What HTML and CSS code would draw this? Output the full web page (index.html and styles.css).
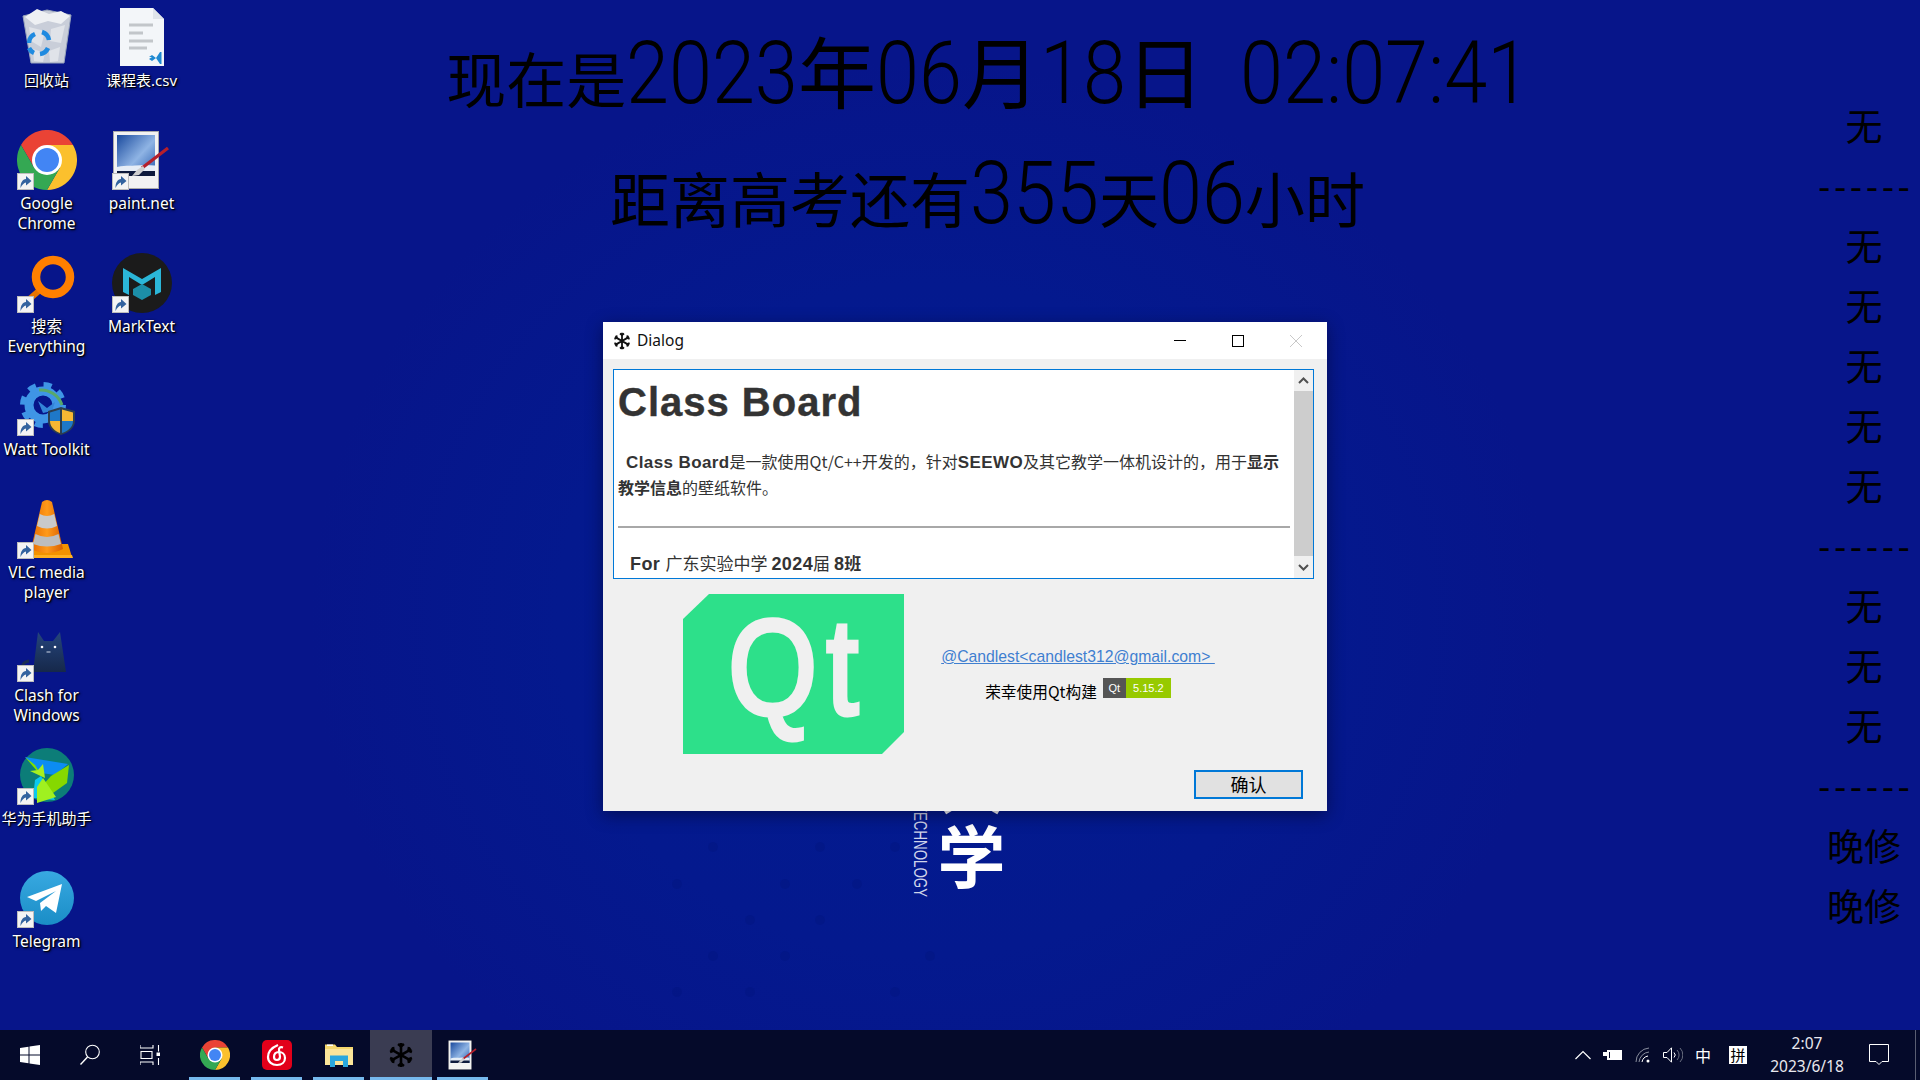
FILE: index.html
```html
<!DOCTYPE html>
<html lang="zh-CN">
<head>
<meta charset="utf-8">
<title>Desktop</title>
<link rel="stylesheet" href="styles.css">
</head>
<body>
<svg class="defs" width="0" height="0" aria-hidden="true">
  <defs>
    <linearGradient id="tg" x1="0" y1="0" x2="0" y2="1"><stop offset="0" stop-color="#38a9e1"/><stop offset="1" stop-color="#1a8dc6"/></linearGradient>
    <linearGradient id="sky" x1="0" y1="0" x2="1" y2="1"><stop offset="0" stop-color="#1a4a9e"/><stop offset=".55" stop-color="#8fb4e4"/><stop offset="1" stop-color="#2358ac"/></linearGradient>
    <linearGradient id="cat" x1="0" y1="0" x2="0" y2="1"><stop offset="0" stop-color="#25457c"/><stop offset="1" stop-color="#16284a"/></linearGradient>
    <linearGradient id="cone" x1="0" y1="0" x2="1" y2="0"><stop offset="0" stop-color="#e66a00"/><stop offset=".5" stop-color="#ff9a1a"/><stop offset="1" stop-color="#d95f00"/></linearGradient>
    <symbol id="shortcut" viewBox="0 0 17 17">
      <rect x=".5" y=".5" width="16" height="16" fill="#f4f4f4" stroke="#bdbdbd"/>
      <path d="M3.500 15C3.500 9.500 5.500 6.500 9 6V3l5.500 5L9 12.500V9.500C7 10 5 11.500 3.500 15Z" fill="#33639f"/>
    </symbol>
    <symbol id="chrome" viewBox="-30 -30 60 60">
      <path d="M-26-15A30 30 0 0 1 26-15H0L-13 7.500Z" fill="#ea4335"/>
      <path d="M26-15A30 30 0 0 1 0 30L13 7.500 0-15Z" fill="#fbc02d"/>
      <path d="M0 30A30 30 0 0 1-26-15L-13 7.500H13Z" fill="#34a853"/>
      <circle r="15" fill="#fff"/><circle r="12" fill="#4285f4"/>
    </symbol>
    <symbol id="paint" viewBox="0 0 60 60">
      <rect x="1.500" y="1.500" width="45" height="57" fill="#f2f2f2" stroke="#a9a9a9"/>
      <rect x="5" y="5" width="38" height="41" fill="url(#sky)"/>
      <path d="M5 37c8-2 12-1 18-1.500s12-1 20 0V42H5Z" fill="#e6edf6"/>
      <rect x="5" y="41" width="38" height="5" fill="#0e1a3c"/>
      <path d="M56 18 30 38" stroke="#b51f2b" stroke-width="3.200" fill="none"/>
      <path d="M31 36 25 40l-5 6 7-1 6-6Z" fill="#cfcfcf"/>
    </symbol>
    <symbol id="snow" viewBox="0 0 24 24">
      <g stroke="currentColor" stroke-width="2.400" fill="none">
        <path d="M12 1V23M2.500 6.500 21.500 17.500M21.500 6.500 2.500 17.500"/>
        <path d="M9.300 1.900 12 4 14.700 1.900M9.300 22.100 12 20 14.700 22.100M19.400 4.600 18.900 8 22.100 9.300M19.400 19.400 18.900 16 22.100 14.700M4.600 4.600 5.100 8 1.900 9.300M4.600 19.400 5.100 16 1.900 14.700"/>
      </g>
    </symbol>
  </defs>
</svg>

<main class="desktop">
  <div class="wall-art" aria-hidden="true">
    <svg class="wall-dots" viewBox="0 0 360 220" width="360" height="220">
      <g fill="#01137a" opacity=".3">
        <circle cx="53" cy="47" r="5"/><circle cx="160" cy="47" r="5"/><circle cx="235" cy="47" r="5"/>
        <circle cx="17" cy="84" r="5"/><circle cx="125" cy="84" r="5"/><circle cx="197" cy="84" r="5"/>
        <circle cx="90" cy="120" r="5"/><circle cx="160" cy="120" r="5"/>
        <circle cx="53" cy="156" r="5"/><circle cx="125" cy="156" r="5"/><circle cx="270" cy="156" r="5"/>
        <circle cx="17" cy="192" r="5"/><circle cx="90" cy="192" r="5"/><circle cx="235" cy="192" r="5"/>
      </g>
    </svg>
    <span class="wall-en">TECHNOLOGY</span>
    <span class="wall-cn">大学</span>
  </div>

  <section class="icons">
    <div class="icon-col">
      <div class="icon">
        <div class="glyph">
          <svg viewBox="0 0 60 60" width="60" height="60">
            <path d="M6 9 30 3l24 5-7 48H14Z" fill="#c9ced9" stroke="#9aa6bc"/>
            <path d="M8 10 20 2l12 5 12-3 9 5-9 8-13-3-13 4Z" fill="#eef0f3"/>
            <path d="M12 20 28 24 24 40 14 34ZM34 22 48 18 44 36 33 34ZM16 42 28 46 26 55 17 54ZM32 44 43 40 41 54 33 55Z" fill="#e0e3e9"/>
            <g fill="none" stroke="#1f8ae0" stroke-width="4.500"><path d="M12 36a10 10 0 0 1 6-9"/><path d="M25 25a10 10 0 0 1 7 8"/><path d="M31 41a10 10 0 0 1-8 6"/><path d="M17 46a10 10 0 0 1-5-5"/></g>
          </svg>
        </div>
        <span class="label label-cjk">回收站</span>
      </div>
      <div class="icon">
        <div class="glyph"><svg viewBox="0 0 60 60" width="60" height="60"><use href="#chrome"/></svg><svg class="sc"><use href="#shortcut"/></svg></div>
        <span class="label">Google Chrome</span>
      </div>
      <div class="icon">
        <div class="glyph">
          <svg viewBox="0 0 60 60" width="60" height="60">
            <path d="M24 36 8 50" stroke="#e87400" stroke-width="6" fill="none"/>
            <circle cx="36" cy="24" r="17" fill="none" stroke="#ff7f00" stroke-width="8.500"/>
          </svg>
          <svg class="sc"><use href="#shortcut"/></svg>
        </div>
        <span class="label">搜索 Everything</span>
      </div>
      <div class="icon">
        <div class="glyph">
          <svg viewBox="0 0 60 60" width="60" height="60">
            <circle cx="26" cy="29" r="14" fill="none" stroke="#3f95e6" stroke-width="9"/>
            <circle cx="26" cy="29" r="20" fill="none" stroke="#3f95e6" stroke-width="6" stroke-dasharray="8 7.700"/>
            <path d="M22 14a22 22 0 0 1 23 15" fill="none" stroke="#58a86a" stroke-width="3"/>
            <path d="M21 25l9 7 8-6-3 9-9 2Z" fill="#3384d8"/>
            <path d="M31 35l13-4 14 4v10c0 7-7 12-14 14-7-2-13-7-13-14Z" fill="#2c3e50"/>
            <path d="M33 36.500l10-3V45H33ZM45 45h11c0 6-5 10-11 12Z" fill="#1e78c8"/>
            <path d="M45 33.500l11 3V45H45ZM33 45h10v12c-5-2-10-6-10-12Z" fill="#f7b733"/>
          </svg>
          <svg class="sc"><use href="#shortcut"/></svg>
        </div>
        <span class="label">Watt Toolkit</span>
      </div>
      <div class="icon">
        <div class="glyph">
          <svg viewBox="0 0 60 60" width="60" height="60">
            <path d="M13 45 9 58H55L51 45Z" fill="#f39200"/>
            <path d="M9 56H55L56 59H8Z" fill="#ffb020"/>
            <path d="M25 3Q30-1 35 3L46 50Q30 58 14 50Z" fill="url(#cone)"/>
            <path d="M22.800 15Q30 19 37.200 15L40 27Q30 32 20 27Z" fill="#c9c9c9"/>
            <path d="M18.500 35Q30 41 41.500 35L44 45Q30 50 16 45Z" fill="#bdbdbd"/>
          </svg>
          <svg class="sc"><use href="#shortcut"/></svg>
        </div>
        <span class="label">VLC media player</span>
      </div>
      <div class="icon">
        <div class="glyph">
          <svg viewBox="0 0 60 60" width="60" height="60">
            <path d="M6 48Q4 40 12 39" fill="none" stroke="#1b2e52" stroke-width="3"/>
            <path d="M21 10l6 9h9l7-9 6 40H16Z" fill="url(#cat)"/>
            <circle cx="25" cy="25" r="1.300" fill="#fff"/><circle cx="38" cy="25" r="1.300" fill="#fff"/>
            <path d="M29.500 30h4" stroke="#cfd8e8" stroke-width="1"/>
          </svg>
          <svg class="sc"><use href="#shortcut"/></svg>
        </div>
        <span class="label">Clash for Windows</span>
      </div>
      <div class="icon">
        <div class="glyph">
          <svg viewBox="0 0 60 60" width="60" height="60">
            <circle cx="30" cy="30" r="27" fill="#0c7d78"/>
            <path d="M8 12 51 19 38 30 24 28Z" fill="#0c8cf2"/>
            <path d="M8 12 26 33 18 20Z" fill="#7fe000"/>
            <path d="M34 31 52 20 50 38 36 48 24 42Z" fill="#86d800"/>
            <path d="M21 25 26 19 28 33 13 26Z" fill="#a6f020"/>
            <path d="M18 35 24 31 38 55 16 53Z" fill="#0ac8f0"/>
            <path d="M20 42 26 33 39 52 20 58Z" fill="#a0f020"/>
          </svg>
          <svg class="sc"><use href="#shortcut"/></svg>
        </div>
        <span class="label label-cjk">华为手机助手</span>
      </div>
      <div class="icon">
        <div class="glyph">
          <svg viewBox="0 0 60 60" width="60" height="60">
            <circle cx="30" cy="30" r="27" fill="url(#tg)"/>
            <path d="M10 29 45 16 39 45 29 38 24 43 23 35 39 23 19 33Z" fill="#fff"/>
          </svg>
          <svg class="sc"><use href="#shortcut"/></svg>
        </div>
        <span class="label">Telegram</span>
      </div>
    </div>
    <div class="icon-col">
      <div class="icon">
        <div class="glyph">
          <svg viewBox="0 0 60 60" width="60" height="60">
            <path d="M8 1H41L52 12V59H8Z" fill="#f3f6f9"/>
            <path d="M41 1 52 12H41Z" fill="#dfe4ea"/>
            <path d="M17 18H41M17 26H31M17 34H41M17 41H35" stroke="#c2c6ca" stroke-width="3"/>
            <path d="M37 50l3-2 4 3 4-6h1.500v12H48l-4-6-4 3-3-2 3-2Z" fill="#1f8ad2"/>
          </svg>
        </div>
        <span class="label label-cjk">课程表.csv</span>
      </div>
      <div class="icon">
        <div class="glyph"><svg viewBox="0 0 60 60" width="60" height="60"><use href="#paint"/></svg><svg class="sc"><use href="#shortcut"/></svg></div>
        <span class="label">paint.net</span>
      </div>
      <div class="icon">
        <div class="glyph">
          <svg viewBox="0 0 60 60" width="60" height="60">
            <circle cx="30" cy="30" r="30" fill="#1b1b1b"/>
            <path d="M11 15 30 26 49 15V39L43 42V24L30 32 17 24V42L11 39Z" fill="#2bb6d8"/>
            <path d="M21 36 30 31 39 36V42L30 47 21 42Z" fill="#1c8ea8"/>
          </svg>
          <svg class="sc"><use href="#shortcut"/></svg>
        </div>
        <span class="label">MarkText</span>
      </div>
    </div>
  </section>

  <section class="clock">
    <p class="clock-line">现在是<span class="num n4">2023</span><span class="unit">年</span><span class="num n2">06</span><span class="unit">月</span><span class="num n2">18</span><span class="unit">日</span><span class="num time">02:07:41</span></p>
    <p class="clock-line">距离高考还有<span class="num n3">355</span>天<span class="num n2">06</span>小时</p>
  </section>

  <aside class="schedule">
    <span>无</span><span class="dash">------</span><span>无</span><span>无</span><span>无</span><span>无</span><span>无</span><span class="dash">------</span><span>无</span><span>无</span><span>无</span><span class="dash">------</span><span>晚修</span><span>晚修</span>
  </aside>

  <div class="dialog">
    <header class="titlebar">
      <svg class="title-icon"><use href="#snow"/></svg>
      <span class="title-text">Dialog</span>
      <div class="win-btns">
        <span class="win-btn"><svg width="12" height="12" viewBox="0 0 12 12"><path d="M0 5.500H12" stroke="#000"/></svg></span>
        <span class="win-btn"><svg width="12" height="12" viewBox="0 0 12 12"><rect x=".5" y=".5" width="11" height="11" fill="none" stroke="#000"/></svg></span>
        <span class="win-btn"><svg width="12" height="12" viewBox="0 0 12 12"><path d="M0 0 12 12M12 0 0 12" stroke="#c8c8c8"/></svg></span>
      </div>
    </header>
    <div class="dialog-body">
      <div class="doc">
        <div class="doc-text">
          <h1>Class Board</h1>
          <p class="intro"><b class="lat">Class Board</b>是一款使用Qt/C++开发的，针对<b class="lat">SEEWO</b>及其它教学一体机设计的，用于<b>显示教学信息</b>的壁纸软件。</p>
          <hr>
          <p class="for"><b class="lat">For </b>广东实验中学 <b class="lat">2024</b>届 <b class="lat">8</b><b>班</b></p>
        </div>
        <div class="scrollbar">
          <svg class="arrow" width="19" height="21" viewBox="0 0 19 21"><path d="M5 13 9.500 8.500 14 13" fill="none" stroke="#505050" stroke-width="2"/></svg>
          <div class="thumb"></div>
          <svg class="arrow" width="19" height="22" viewBox="0 0 19 22"><path d="M5 9 9.500 13.500 14 9" fill="none" stroke="#505050" stroke-width="2"/></svg>
        </div>
      </div>
      <div class="about">
        <div class="qt-logo"><span>Qt</span></div>
        <div class="about-info">
          <a class="mail">@Candlest&lt;candlest312@gmail.com&gt; </a>
          <div class="built"><span>荣幸使用Qt构建</span><span class="badge"><i class="b-l">Qt</i><i class="b-r">5.15.2</i></span></div>
        </div>
      </div>
      <div class="actions"><button class="ok">确认</button></div>
    </div>
  </div>
</main>

<footer class="taskbar">
  <div class="tb-sys">
    <span class="tb-slot"><svg width="20" height="20" viewBox="0 0 20 20"><path d="M0 3 8.500 1.800V9.500H0ZM9.500 1.600 20 0V9.500H9.500ZM0 10.500H8.500V18.200L0 17ZM9.500 10.500H20V20L9.500 18.400Z" fill="#fff"/></svg></span>
    <span class="tb-slot"><svg width="22" height="22" viewBox="0 0 22 22"><circle cx="13.500" cy="8" r="6.800" fill="none" stroke="#fff" stroke-width="1.100"/><path d="M8.500 13 1.500 20.500" stroke="#fff" stroke-width="1.400"/></svg></span>
    <span class="tb-slot"><svg width="20" height="20" viewBox="0 0 20 20"><path d="M0 0V3H13V0M1 6.500H12V13.500H1ZM0 20V17H13V20M18.500 0V6.500M18.500 13V20" fill="none" stroke="#fff" stroke-width="1.100"/><rect x="16.500" y="7.500" width="3.500" height="3.500" fill="#fff"/></svg></span>
  </div>
  <div class="tb-apps">
    <span class="tb-app"><svg width="30" height="30" viewBox="0 0 60 60"><use href="#chrome"/></svg></span>
    <span class="tb-app">
      <svg width="30" height="30" viewBox="0 0 30 30"><rect width="30" height="30" rx="5" fill="#e2001a"/><path d="M16 5C9 8 6 12 6 17c0 5 4 8 9 8 5 0 8-3 8-7 0-4-3-6-6-6-3 0-5 2-5 5 0 2 1.500 3 3 3 2 0 3-1.500 3-3.500L17 10c-.3-2 1-3.500 4-2.500" fill="none" stroke="#fff" stroke-width="2.200"/></svg>
    </span>
    <span class="tb-app">
      <svg width="28" height="24" viewBox="0 0 28 24"><path d="M0 1.500H10L12 4H28V22H0Z" fill="#f5d76e"/><path d="M0 6H28V22H0Z" fill="#fbe59a"/><rect x="2" y="1.500" width="6" height="1.500" fill="#fff"/><path d="M5 12.500H23V24H18V18H10V24H5Z" fill="#2aa7de"/></svg>
    </span>
    <span class="tb-app tb-active"><svg class="tb-snow"><use href="#snow"/></svg></span>
    <span class="tb-app"><svg width="30" height="30" viewBox="0 0 60 60"><use href="#paint"/></svg></span>
  </div>
  <div class="tray">
    <span class="tray-item"><svg width="16" height="10" viewBox="0 0 16 10"><path d="M.5 9 8 1.500 15.500 9" fill="none" stroke="#fff" stroke-width="1.200"/></svg></span>
    <span class="tray-item"><svg width="20" height="12" viewBox="0 0 20 12"><rect x="4.500" y="1.500" width="14" height="9" fill="#fff" stroke="#fff"/><rect x="6" y="3" width="1" height="6" fill="#050a2a"/><path d="M0 3H4V7H0Z" fill="#fff"/></svg></span>
    <span class="tray-item"><svg width="16" height="16" viewBox="0 0 16 16"><g fill="none" stroke="#8a8f9e"><path d="M1 15A14 14 0 0 1 14 1"/><path d="M4 15A11 11 0 0 1 14 5"/></g><path d="M7 15A7.500 7.500 0 0 1 13 9" fill="none" stroke="#fff"/><circle cx="13" cy="14" r="1.500" fill="#fff"/></svg></span>
    <span class="tray-item"><svg width="20" height="16" viewBox="0 0 20 16"><path d="M.5 5.500H4L8.500.8V15.200L4 10.500H.5Z" fill="none" stroke="#fff"/><path d="M11 5.500a3.500 3.500 0 0 1 0 5" fill="none" stroke="#fff"/><path d="M14 3a7 7 0 0 1 0 10M17 1a10 10 0 0 1 0 14" fill="none" stroke="#6a6f80"/></svg></span>
    <span class="tray-item tray-text">中</span>
    <span class="tray-ime"><b>拼</b></span>
    <div class="tray-clock"><span>2:07</span><span>2023/6/18</span></div>
    <span class="tray-note"><svg width="20" height="22" viewBox="0 0 20 22"><path d="M.5 .5H19.500V17.500H13L10 20.500 7 17.500H.5Z" fill="none" stroke="#fff"/></svg></span>
    <span class="show-desktop"></span>
  </div>
</footer>
</body>
</html>
```
FILE: styles.css
```css
* { box-sizing: border-box; }
html, body { margin: 0; padding: 0; width: 1920px; height: 1080px; overflow: hidden; }
body {
  font-family: "Noto Sans", "Noto Sans CJK SC", sans-serif;
  background: #07158a;
  display: flex;
  flex-direction: column;
}
.defs { position: absolute; }

.desktop {
  position: relative;
  height: 1030px;
  display: flex;
  background: radial-gradient(ellipse 620px 560px at 930px 620px, #021b8f 0%, #04198e 60%, #07158a 100%);
  overflow: hidden;
}

/* wallpaper */
.wall-art { position: absolute; left: 660px; top: 800px; width: 360px; height: 220px; }
.wall-dots { position: absolute; left: 0; top: 0; }
.wall-en {
  position: absolute;
  left: 252px;
  bottom: 123px;
  writing-mode: vertical-rl;
  white-space: nowrap;
  font: 18px/15px "Liberation Sans", sans-serif;
  color: #cfd4ea;
  transform: scaleY(.74);
  transform-origin: bottom;
}
.wall-cn {
  position: absolute;
  left: 274px;
  bottom: 122px;
  writing-mode: vertical-rl;
  white-space: nowrap;
  font: 700 68px/74px "Noto Sans CJK SC", sans-serif;
  letter-spacing: 7px;
  color: #fff;
}

/* desktop icons */
.icons { display: flex; width: 190px; margin-left: -1px; padding-top: 2px; flex: none; }
.icon-col { width: 95px; display: flex; flex-direction: column; }
.icon { height: 123px; display: flex; flex-direction: column; align-items: center; padding-top: 5px; }
.glyph { position: relative; width: 60px; height: 60px; flex: none; }
.glyph > svg:first-child { display: block; overflow: visible; }
.sc { position: absolute; left: 0; bottom: 0; width: 17px; height: 17px; }
.label {
  margin-top: 3px;
  width: 95px;
  text-align: center;
  font-size: 15.500px;
  line-height: 20px;
  color: #fff;
  text-shadow: 1px 1px 1px #000, 1px 1px 3px #000;
}
.label-cjk { font-size: 15px; }

/* big clock */
.clock { flex: 1; padding: 17px 22px 0 0; display: flex; flex-direction: column; align-items: center; }
.clock-line {
  margin: 0;
  height: 120px;
  white-space: nowrap;
  color: #000;
  font: 60px/120px "Noto Sans CJK SC", sans-serif;
}
.num {
  display: inline-block;
  font-family: "Roboto", "Liberation Sans", sans-serif;
  font-weight: 300;
  font-size: 88px;
  line-height: 0;
  transform: scaleX(.88);
  transform-origin: left;
}
.n2 { margin-right: -11.700px; }
.n3 { margin-right: -17.600px; }
.n4 { margin-right: -23.500px; }
.time { margin-left: 36px; margin-right: -41.100px; transform: scaleX(.88); }
.unit { font-size: 78px; line-height: 0; }

/* schedule column */
.schedule {
  width: 112px;
  flex: none;
  padding-top: 95px;
  display: flex;
  flex-direction: column;
  align-items: center;
  color: #000;
  font: 37px/60px "Noto Sans CJK SC", sans-serif;
}
.dash { letter-spacing: 4px; padding-left: 4px; font-family: "Noto Sans", sans-serif; }

/* dialog window */
.dialog {
  position: absolute;
  left: 603px;
  top: 322px;
  width: 724px;
  height: 489px;
  background: #f0f0f0;
  box-shadow: 0 4px 16px rgba(0, 0, 20, .45);
  display: flex;
  flex-direction: column;
}
.titlebar { height: 37px; background: #fff; display: flex; align-items: center; padding-left: 10px; flex: none; }
.title-icon { width: 18px; height: 18px; color: #111; margin-right: 6px; }
.title-text { font-size: 15.500px; line-height: 18px; margin-top: -2px; color: #111; }
.win-btns { margin-left: auto; display: flex; padding-right: 2px; }
.win-btn { width: 58px; height: 37px; display: flex; align-items: center; justify-content: center; }

.dialog-body { flex: 1; padding: 10px 13px 12px 10px; display: flex; flex-direction: column; }
.doc { height: 210px; border: 1px solid #0078d7; background: #fff; display: flex; overflow: hidden; flex: none; }
.doc-text { flex: 1; padding: 0 4px; color: #333; overflow: hidden; font-size: 16px; }
.doc-text h1 {
  margin: 9px 0 0;
  font: bold 40px/46px "Liberation Sans", sans-serif;
  letter-spacing: 1px;
  -webkit-text-stroke: .4px #333;
}
.doc-text p { margin: 0; font-family: "Noto Sans CJK SC", sans-serif; }
.doc-text .intro { margin-top: 24px; line-height: 24px; text-indent: 8px; }
.lat { font-family: "Liberation Sans", sans-serif; font-size: 17px; letter-spacing: .4px; }
.doc-text hr { margin: 27px 0 0; height: 2px; border: 0; background: #a8a8a8; }
.doc-text .for { margin-top: 23px; padding-left: 12px; white-space: pre; line-height: 24px; font-size: 17px; }
.for .lat { font-size: 18px; }
.scrollbar { width: 19px; background: #f0f0f0; display: flex; flex-direction: column; flex: none; }
.arrow { flex: none; display: block; }
.thumb { flex: 1; background: #cdcdcd; }

.about { display: flex; margin-top: 15px; padding-left: 70px; height: 160px; flex: none; }
.qt-logo {
  width: 221px;
  height: 160px;
  padding-bottom: 14px;
  flex: none;
  background: #2de08a;
  clip-path: polygon(26px 0, 100% 0, 100% 138px, 199px 100%, 0 100%, 0 25px);
  display: flex;
  align-items: center;
  justify-content: center;
}
.qt-logo span {
  font: 136px/146px "Liberation Sans", sans-serif;
  color: #f0f0f0;
  -webkit-text-stroke: 5px #f0f0f0;
  letter-spacing: 11px;
  padding-left: 11px;
  transform: scaleX(.84);
}
.about-info { width: 348px; flex: none; padding-top: 1px; display: flex; flex-direction: column; align-items: center; justify-content: center; gap: 14px; }
.mail {
  font: 15.750px/20px "Liberation Sans", sans-serif;
  color: #3f7fd0;
  text-decoration: underline;
  white-space: pre;
}
.built { display: flex; align-items: flex-start; gap: 6px; font: 15.700px/20px "Noto Sans CJK SC", sans-serif; color: #000; }
.built > span:first-child { margin-top: 1px; }
.badge { display: flex; height: 20px; font: 11px/20px "Liberation Sans", sans-serif; color: #fff; margin-top: -3px; }
.badge i { font-style: normal; display: block; text-align: center; }
.b-l { width: 23px; background: #555; }
.b-r { width: 45px; background: #97ca00; }

.actions { margin-top: 16px; display: flex; justify-content: flex-end; padding-right: 11px; }
.ok {
  width: 109px;
  height: 29px;
  padding: 0;
  border: 2px solid #0078d7;
  background: #e1e1e1;
  color: #000;
  font: 18px/25px "Noto Sans CJK SC", sans-serif;
}

/* taskbar */
.taskbar { height: 50px; flex: none; background: #050a2a; display: flex; align-items: stretch; }
.tb-sys { display: flex; width: 184px; flex: none; }
.tb-slot { width: 60px; display: flex; align-items: center; justify-content: center; }
.tb-apps { display: flex; }
.tb-app { position: relative; width: 62px; padding-right: 1px; display: flex; align-items: center; justify-content: center; }
.tb-app::after { content: ""; position: absolute; left: 5px; right: 6px; bottom: 0; height: 3px; background: #76b9ed; }
.tb-active { background: #3a3c52; }
.tb-active::after { left: 0; right: 0; }
.tb-snow { width: 26px; height: 26px; color: #000; }
.tray { margin-left: auto; display: flex; align-items: center; height: 50px; color: #fff; }
.tray-item { width: 30px; display: flex; align-items: center; justify-content: center; }
.tray-text { font: 16px/20px "Noto Sans CJK SC", sans-serif; }
.tray-ime { width: 40px; display: flex; justify-content: center; }
.tray-ime b { width: 18px; height: 18px; background: #fff; color: #000; font: 15px/18px "Noto Sans CJK SC", sans-serif; text-align: center; display: block; }
.tray-clock { width: 98px; display: flex; flex-direction: column; align-items: center; font-size: 15.500px; line-height: 23px; color: #e8e8ee; }
.tray-note { width: 46px; display: flex; justify-content: center; }
.show-desktop { width: 18px; height: 50px; position: relative; }
.show-desktop::before { content: ""; position: absolute; left: 13px; top: 0; bottom: 0; width: 1px; background: #5a5e72; }
```
